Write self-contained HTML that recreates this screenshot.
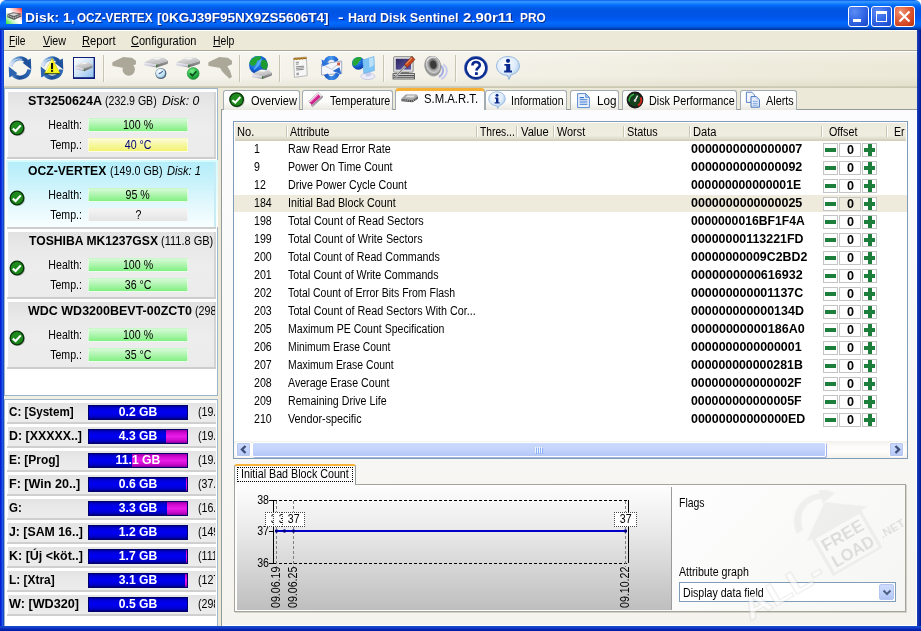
<!DOCTYPE html>
<html><head><meta charset="utf-8"><title>Hard Disk Sentinel</title>
<style>
*{box-sizing:border-box;margin:0;padding:0}
html,body{width:921px;height:631px;overflow:hidden;background:#ECE9D8}
body{position:relative;font-family:"Liberation Sans",sans-serif;font-size:12px;color:#000;line-height:1}
.a{position:absolute}
.t{position:absolute;white-space:nowrap;line-height:14px;height:14px;transform-origin:0 50%}
.s{display:inline-block;transform:scaleX(.885)}
.b{font-weight:bold}
#title{left:0;top:0;width:921px;height:30px;border-radius:6px 6px 0 0;
background:linear-gradient(to bottom,#0058EE 0%,#3593FF 5%,#288EFF 9%,#127DFF 13%,#036FFC 17%,#0262EE 23%,#0057E5 30%,#0054E3 40%,#0055EB 56%,#005BF5 66%,#026AFE 76%,#0062EF 86%,#0052D6 92%,#0040AB 96%,#003092 100%)}
#tl{left:0;top:0;width:8px;height:8px;background:#fff}
#bl{left:0;top:30px;width:4px;height:601px;background:linear-gradient(to right,#0019CF 0,#0A2CD8 30%,#2459E6 65%,#1040BC 100%)}
#br{left:917px;top:30px;width:4px;height:601px;background:linear-gradient(to right,#1A40BC 0,#0C2CA8 50%,#021A94 100%)}
#bb{left:0;top:626px;width:921px;height:5px;background:linear-gradient(to bottom,#1A4CCC 0,#1242C8 30%,#0828B8 60%,#0018A0 100%)}
.cb{position:absolute;top:6px;width:21px;height:21px;border:1px solid #fff;border-radius:3px;
background:radial-gradient(circle at 30% 25%,#5C8CF2 0,#3A6EEA 40%,#2455D8 75%,#1C45C0 100%)}
.cbx{background:radial-gradient(circle at 30% 25%,#EE9476 0,#E0603C 40%,#D0411C 75%,#B83412 100%)}
.menu{top:33.5px;font-size:12px}
.sep{position:absolute;top:55px;width:2px;height:27px;border-left:1px solid #C8C5B4;border-right:1px solid #F9F8F3}
#tb{left:4px;top:52px;width:913px;height:34px;background:linear-gradient(to bottom,rgba(255,255,255,.25) 0,rgba(255,255,255,0) 40%,rgba(120,110,60,0) 70%,rgba(120,110,60,.08) 100%),linear-gradient(to right,#F6F5EE 0,#F3F1E7 55%,#EEEBDC 85%,#ECE9D8 100%)}

#lp{left:4px;top:88px;width:214px;height:308px;background:#fff;border:1px solid #9DB5CB}
#lps{left:4px;top:396px;width:214px;height:3px;background:#F1EFE2}
#lp2{left:4px;top:399px;width:214px;height:227px;background:#fff;border:1px solid #9DB5CB;border-bottom:none}
.di{position:absolute;left:8px;width:208px;height:65px;background:linear-gradient(to bottom,#E1E1E1 0,#E9E9E9 25%,#EDEDED 55%,#EBEBEB 100%);border-right:2px solid #D4D4D4}
.dis{position:absolute;left:7px;width:209px;height:2px;background:#CDCDCD}
.di.sel{background:linear-gradient(to bottom,#B4EEFA 0,#C8F2FB 30%,#E2F8FD 65%,#F8FEFF 100%);border-right:2px solid #C8ECF6}
.glow{position:absolute;left:6px;width:212px;height:67px;background:linear-gradient(to bottom,#D8FBFC 0,#E8FCFD 50%,#FFFFFF 100%)}
.lab{width:60px;text-align:right;left:22px;transform-origin:100% 50%;transform:scaleX(.885)}
.bar{position:absolute;left:88px;width:100px;height:14px;text-align:center;line-height:12px;font-size:12px;border:1px solid rgba(255,255,255,.55)}
.g{background:linear-gradient(to bottom,#D6FAD6 0,#B4F6B4 40%,#82F082 100%)}
.y{background:linear-gradient(to bottom,#FCFCD8 0,#F8F8A8 40%,#F2F272 100%)}
.nv{color:#00007C}
.q{background:linear-gradient(to bottom,#F4F4F4 0,#ECECEC 50%,#E4E4E4 100%)}
.dr{position:absolute;left:8px;width:208px;height:19px;background:linear-gradient(to bottom,#E3E3E3 0,#EAEAEA 50%,#ECECEC 100%)}
.drs{position:absolute;left:7px;width:209px;height:2px;background:#CFCFCF}
.dl{left:9px;font-weight:bold;font-size:12px}
.db{position:absolute;left:88px;width:100px;height:15px;background:linear-gradient(to bottom,#0000A0 0,#0000D8 18%,#0000F4 50%,#0000D0 80%,#000088 100%);border:1px solid #000066;color:#fff;font-weight:bold;font-size:12px;text-align:center;line-height:13px;overflow:hidden}
.db i{position:absolute;right:0;top:0;height:13px;background:linear-gradient(to bottom,#A000A8 0,#D80CD8 25%,#E81CE8 50%,#CC08CC 80%,#8C009C 100%)}
.db span{position:relative}
#page{left:221px;top:109px;width:696px;height:517px;background:linear-gradient(to bottom,#FCFCFE 0,#F4F3EE 100%);border-left:1px solid #919B9C;border-top:1px solid #919B9C;box-shadow:-1px -1px 0 #fff inset}
.tab{position:absolute;top:90px;height:20px;background:linear-gradient(to bottom,#FFFFFF 0,#FCFCFA 55%,#F0EFE9 85%,#E8E7E0 100%);border:1px solid #A2ACB2;border-bottom:none;border-radius:3px 3px 0 0}
.tab.on{top:88px;height:22px;background:#FCFCFE;border-top:3px solid #F7B036;border-radius:4px 4px 0 0}
#lv{left:233px;top:121px;width:675px;height:338px;background:#fff;border:1px solid #7F9DB9}
#hd{left:235px;top:123px;width:671px;height:18px;background:linear-gradient(to bottom,#EDEBDD 0,#EFEDE0 70%,#E2DFCF 85%,#CFCBB9 100%)}
.hs{position:absolute;top:126px;width:2px;height:11px;border-left:1px solid #C7C5B2;border-right:1px solid #fff}
.ht{top:125px}
.no{left:254px;transform:scaleX(.885)}
.at{left:288px}
.dt{left:691px;font-weight:bold}
.ob{position:absolute;height:14px;background:#fff;border:1px solid #C4C4C4}
#sb{left:234px;top:441px;width:673px;height:17px;background:linear-gradient(to bottom,#F3F1EC 0,#FDFCFA 35%,#FDFCFA 65%,#F3F1EC 100%)}
.sbb{position:absolute;top:442px;width:15px;height:15px;border:1px solid #fff;border-radius:2px;background:linear-gradient(to bottom,#CBDAFD 0,#C1D2FB 60%,#B5C8F6 100%);box-shadow:0 0 0 1px #B8C6EE inset}
#thumb{left:252px;top:442px;width:574px;height:15px;border-radius:2px;border:1px solid #fff;background:linear-gradient(to bottom,#CBDAFD 0,#C1D2FB 55%,#B4C7F6 100%);box-shadow:1px 1px 0 #9FB3E8}
#gp{left:234px;top:484px;width:672px;height:128px;background:linear-gradient(135deg,#FFFFFF 0,#FDFDFD 60%,#F5F5F3 100%);border:1px solid #A4A49C;box-shadow:1px 1px 0 #D4D2C6}
#gbg{left:237px;top:487px;width:435px;height:123px;background:linear-gradient(to bottom,#FDFDFD 0,#EDEDED 30%,#D6D6D6 65%,#BEBEBE 100%);border-right:1px solid #9A9A9A}
#stab{left:234px;top:464px;width:122px;height:21px;background:#FBFBFB;border:1px solid #919B9C;border-bottom:none;border-top:2px solid #F8B238;border-radius:3px 3px 0 0}
#sfr{left:237px;top:467px;width:116px;height:15px;border:1px dotted #000}
.yl{width:20px;text-align:right;left:249px;transform-origin:100% 50%;transform:scaleX(.885)}
.mk{position:absolute;top:512px;width:23px;height:15px;background:#fff;border:1px dotted #444;text-align:center;line-height:13px;font-size:12px}
.xl{position:absolute;white-space:nowrap;font-size:12px;line-height:12px;height:12px;transform-origin:0 0;transform:rotate(-90deg) scaleX(.885)}
#cmb{left:679px;top:582px;width:217px;height:20px;background:#fff;border:1px solid #7F9DB9}
#cbt{left:879px;top:584px;width:15px;height:16px;border-radius:2px;border:1px solid #B7C6F0;background:linear-gradient(to bottom,#CDDBFD 0,#C1D2FB 60%,#AFC3F5 100%)}
</style></head><body><div id="root" style="position:absolute;left:0;top:0;width:921px;height:631px;will-change:transform">

<div class="a" style="left:0;top:0;width:921px;height:12px;background:#fff"></div>
<div class="a" id="title"></div>
<div class="a" style="left:4px;top:30px;width:913px;height:1px;background:#fff"></div>
<div class="a" id="bl"></div><div class="a" id="br"></div><div class="a" id="bb"></div>
<div class="a" style="left:6px;top:8px;width:16px;height:16px;background:linear-gradient(to top right,#28E428 0,#B8F4B8 25%,#fff 45%,#fff 55%,#FFB0B0 75%,#FF2828 100%)"></div>
<svg class="a" style="left:6px;top:8px" width="16" height="16"><path d="M1.500 6 L7 4.200 L15 5.400 L15.400 8.600 L8 12 L1.200 9.200 Z" fill="#3C3C3C" opacity=".8"/><path d="M3 6.300 L7.400 5.200 L13 6 L8 8 Z" fill="#D8D8D8"/><path d="M2 7.600 L8 10 L15 6.800" stroke="#E8E8E8" stroke-width=".8" fill="none" stroke-dasharray="1.500 1"/></svg>
<div class="t b" style="left:24.9px;top:10px;font-size:13px;line-height:16px;height:16px;color:#fff;text-shadow:1px 1px 0 #0A2C8C;transform:scaleX(1.0703)">Disk: 1,</div>
<div class="t b" style="left:77.2px;top:10px;font-size:13px;line-height:16px;height:16px;color:#fff;text-shadow:1px 1px 0 #0A2C8C;transform:scaleX(0.901)">OCZ-VERTEX</div>
<div class="t b" style="left:156.8px;top:10px;font-size:13px;line-height:16px;height:16px;color:#fff;text-shadow:1px 1px 0 #0A2C8C;transform:scaleX(1.037)">[0KGJ39F95NX9ZS5606T4]</div>
<div class="t b" style="left:338.0px;top:10px;font-size:13px;line-height:16px;height:16px;color:#fff;text-shadow:1px 1px 0 #0A2C8C;transform:scaleX(1.2892)">-</div>
<div class="t b" style="left:348.1px;top:10px;font-size:13px;line-height:16px;height:16px;color:#fff;text-shadow:1px 1px 0 #0A2C8C;transform:scaleX(0.961)">Hard Disk Sentinel</div>
<div class="t b" style="left:463.3px;top:10px;font-size:13px;line-height:16px;height:16px;color:#fff;text-shadow:1px 1px 0 #0A2C8C;transform:scaleX(1.1471)">2.90r11</div>
<div class="t b" style="left:519.6px;top:10px;font-size:13px;line-height:16px;height:16px;color:#fff;text-shadow:1px 1px 0 #0A2C8C;transform:scaleX(0.9087)">PRO</div>
<div class="cb" style="left:848px"><div class="a" style="left:4px;top:12px;width:8px;height:3px;background:#fff"></div></div>
<div class="cb" style="left:871px"><div class="a" style="left:4px;top:4px;width:11px;height:11px;border:1px solid #fff;border-top-width:3px"></div></div>
<div class="cb cbx" style="left:894px"><svg class="a" style="left:3px;top:3px" width="13" height="13"><path d="M1.5 1.5 L11.5 11.5 M11.5 1.5 L1.5 11.5" stroke="#fff" stroke-width="2.2"/></svg></div>
<div class="t menu" style="left:9px;transform:scaleX(0.853)"><u>F</u>ile</div>
<div class="t menu" style="left:43px;transform:scaleX(0.8916)"><u>V</u>iew</div>
<div class="t menu" style="left:81.5px;transform:scaleX(0.9325)"><u>R</u>eport</div>
<div class="t menu" style="left:131px;transform:scaleX(0.9161)"><u>C</u>onfiguration</div>
<div class="t menu" style="left:213px;transform:scaleX(0.8668)"><u>H</u>elp</div>
<div class="a" style="left:4px;top:50px;width:913px;height:2px;border-top:1px solid #ACA899;border-bottom:1px solid #fff"></div>
<div class="a" id="tb"></div>
<div class="a" style="left:4px;top:86px;width:913px;height:2px;background:linear-gradient(to bottom,#D5D2BF,#C6C3AE)"></div>
<div class="sep" style="left:103px"></div>
<div class="sep" style="left:239px"></div>
<div class="sep" style="left:279px"></div>
<div class="sep" style="left:383px"></div>
<div class="sep" style="left:455px"></div><div class="a" id="lp"></div><div class="a" id="lps"></div><div class="a" id="lp2"></div>
<div class="dis" style="top:157px"></div><div class="di" style="top:92px"></div>
<div class="a" style="left:28px;top:94px;width:187px;height:14px;overflow:hidden"><b class="t" style="left:-0.3px;top:0;transform:scaleX(1.0464)">ST3250624A</b><span class="t" style="left:77.0px;top:0;transform:scaleX(0.8807)">(232.9 GB)</span><i class="t" style="left:134.0px;top:0;transform:scaleX(1.014)">Disk: 0</i></div>
<svg class="a" style="left:7.600000000000001px;top:118.5px" width="19" height="19" viewBox="0 0 19 19"><circle cx="9.800" cy="9.800" r="7.300" fill="#3A3A3A" opacity=".3"/><circle cx="9" cy="9" r="6.800" fill="#1E8A1E" stroke="#083408" stroke-width="1.300"/><path d="M4.800 9.600 L7.600 12 L12.800 6.400" stroke="#fff" stroke-width="2.100" fill="none"/></svg>
<div class="t lab" style="top:118px">Health:</div><div class="bar g" style="top:118px"><span class="s">100 %</span></div>
<div class="t lab" style="top:138px">Temp.:</div><div class="bar y" style="top:138px"><span class="s nv">40 °C</span></div>
<div class="glow" style="top:160px"></div>
<div class="dis" style="top:227px"></div><div class="di sel" style="top:162px"></div>
<div class="a" style="left:28px;top:164px;width:187px;height:14px;overflow:hidden"><b class="t" style="left:0.2px;top:0;transform:scaleX(1.0124)">OCZ-VERTEX</b><span class="t" style="left:81.8px;top:0;transform:scaleX(0.8943)">(149.0 GB)</span><i class="t" style="left:138.9px;top:0;transform:scaleX(0.9267)">Disk: 1</i></div>
<svg class="a" style="left:7.600000000000001px;top:188.5px" width="19" height="19" viewBox="0 0 19 19"><circle cx="9.800" cy="9.800" r="7.300" fill="#3A3A3A" opacity=".3"/><circle cx="9" cy="9" r="6.800" fill="#1E8A1E" stroke="#083408" stroke-width="1.300"/><path d="M4.800 9.600 L7.600 12 L12.800 6.400" stroke="#fff" stroke-width="2.100" fill="none"/></svg>
<div class="t lab" style="top:188px">Health:</div><div class="bar g" style="top:188px"><span class="s">95 %</span></div>
<div class="t lab" style="top:208px">Temp.:</div><div class="bar q" style="top:208px"><span class="s">?</span></div>
<div class="dis" style="top:297px"></div><div class="di" style="top:232px"></div>
<div class="a" style="left:28px;top:234px;width:187px;height:14px;overflow:hidden"><b class="t" style="left:0.5px;top:0;transform:scaleX(1.0128)">TOSHIBA MK1237GSX</b><span class="t" style="left:133.1px;top:0;transform:scaleX(0.917)">(111.8 GB)</span></div>
<svg class="a" style="left:7.600000000000001px;top:258.5px" width="19" height="19" viewBox="0 0 19 19"><circle cx="9.800" cy="9.800" r="7.300" fill="#3A3A3A" opacity=".3"/><circle cx="9" cy="9" r="6.800" fill="#1E8A1E" stroke="#083408" stroke-width="1.300"/><path d="M4.800 9.600 L7.600 12 L12.800 6.400" stroke="#fff" stroke-width="2.100" fill="none"/></svg>
<div class="t lab" style="top:258px">Health:</div><div class="bar g" style="top:258px"><span class="s">100 %</span></div>
<div class="t lab" style="top:278px">Temp.:</div><div class="bar g" style="top:278px"><span class="s">36 °C</span></div>
<div class="dis" style="top:367px"></div><div class="di" style="top:302px"></div>
<div class="a" style="left:28px;top:304px;width:187px;height:14px;overflow:hidden"><b class="t" style="left:-0.2px;top:0;transform:scaleX(1.0415)">WDC WD3200BEVT-00ZCT0</b><span class="t" style="left:167.3px;top:0;transform:scaleX(0.8892)">(298.1 GB)</span></div>
<svg class="a" style="left:7.600000000000001px;top:328.5px" width="19" height="19" viewBox="0 0 19 19"><circle cx="9.800" cy="9.800" r="7.300" fill="#3A3A3A" opacity=".3"/><circle cx="9" cy="9" r="6.800" fill="#1E8A1E" stroke="#083408" stroke-width="1.300"/><path d="M4.800 9.600 L7.600 12 L12.800 6.400" stroke="#fff" stroke-width="2.100" fill="none"/></svg>
<div class="t lab" style="top:328px">Health:</div><div class="bar g" style="top:328px"><span class="s">100 %</span></div>
<div class="t lab" style="top:348px">Temp.:</div><div class="bar g" style="top:348px"><span class="s">35 °C</span></div>
<div class="drs" style="top:422px"></div><div class="dr" style="top:403px"></div>
<div class="t dl" style="top:405px;transform:scaleX(0.9702)">C: [System]</div>
<div class="db" style="top:405px"><span style="display:inline-block;transform:scaleX(1.0127)">0.2 GB</span></div>
<div class="a" style="left:198px;top:405px;width:17px;height:14px;overflow:hidden"><div class="t" style="left:0;top:0;transform:scaleX(.885)">(19.</div></div>
<div class="drs" style="top:446px"></div><div class="dr" style="top:427px"></div>
<div class="t dl" style="top:429px;transform:scaleX(1.0327)">D: [XXXXX..]</div>
<div class="db" style="top:429px"><i style="width:21px"></i><span style="display:inline-block;transform:scaleX(1.0127)">4.3 GB</span></div>
<div class="a" style="left:198px;top:429px;width:17px;height:14px;overflow:hidden"><div class="t" style="left:0;top:0;transform:scaleX(.885)">(19.</div></div>
<div class="drs" style="top:470px"></div><div class="dr" style="top:451px"></div>
<div class="t dl" style="top:453px;transform:scaleX(0.9966)">E: [Prog]</div>
<div class="db" style="top:453px"><i style="width:55px"></i><span style="display:inline-block;transform:scaleX(1.0175)">11.1 GB</span></div>
<div class="a" style="left:198px;top:453px;width:17px;height:14px;overflow:hidden"><div class="t" style="left:0;top:0;transform:scaleX(.885)">(19.</div></div>
<div class="drs" style="top:494px"></div><div class="dr" style="top:475px"></div>
<div class="t dl" style="top:477px;transform:scaleX(1.0487)">F: [Win 20..]</div>
<div class="db" style="top:477px"><i style="width:1px"></i><span style="display:inline-block;transform:scaleX(1.0127)">0.6 GB</span></div>
<div class="a" style="left:198px;top:477px;width:17px;height:14px;overflow:hidden"><div class="t" style="left:0;top:0;transform:scaleX(.885)">(37.</div></div>
<div class="drs" style="top:518px"></div><div class="dr" style="top:499px"></div>
<div class="t dl" style="top:501px;transform:scaleX(0.9593)">G:</div>
<div class="db" style="top:501px"><i style="width:20px"></i><span style="display:inline-block;transform:scaleX(1.0127)">3.3 GB</span></div>
<div class="a" style="left:198px;top:501px;width:17px;height:14px;overflow:hidden"><div class="t" style="left:0;top:0;transform:scaleX(.885)">(16.</div></div>
<div class="drs" style="top:542px"></div><div class="dr" style="top:523px"></div>
<div class="t dl" style="top:525px;transform:scaleX(1.0262)">J: [SAM 16..]</div>
<div class="db" style="top:525px"><span style="display:inline-block;transform:scaleX(1.0127)">1.2 GB</span></div>
<div class="a" style="left:198px;top:525px;width:17px;height:14px;overflow:hidden"><div class="t" style="left:0;top:0;transform:scaleX(.885)">(149</div></div>
<div class="drs" style="top:566px"></div><div class="dr" style="top:547px"></div>
<div class="t dl" style="top:549px;transform:scaleX(1.0408)">K: [Új &lt;köt..]</div>
<div class="db" style="top:549px"><i style="width:1px"></i><span style="display:inline-block;transform:scaleX(1.0127)">1.7 GB</span></div>
<div class="a" style="left:198px;top:549px;width:17px;height:14px;overflow:hidden"><div class="t" style="left:0;top:0;transform:scaleX(.885)">(111</div></div>
<div class="drs" style="top:590px"></div><div class="dr" style="top:571px"></div>
<div class="t dl" style="top:573px;transform:scaleX(0.9913)">L: [Xtra]</div>
<div class="db" style="top:573px"><i style="width:2px"></i><span style="display:inline-block;transform:scaleX(1.0127)">3.1 GB</span></div>
<div class="a" style="left:198px;top:573px;width:17px;height:14px;overflow:hidden"><div class="t" style="left:0;top:0;transform:scaleX(.885)">(127</div></div>
<div class="drs" style="top:614px"></div><div class="dr" style="top:595px"></div>
<div class="t dl" style="top:597px;transform:scaleX(1.0534)">W: [WD320]</div>
<div class="db" style="top:597px"><span style="display:inline-block;transform:scaleX(1.0127)">0.5 GB</span></div>
<div class="a" style="left:198px;top:597px;width:17px;height:14px;overflow:hidden"><div class="t" style="left:0;top:0;transform:scaleX(.885)">(298</div></div><div class="a" id="page"></div>
<div class="tab" style="left:223px;width:77px"></div>
<div class="t" style="left:251.1px;top:94px;transform:scaleX(0.9177)">Overview</div>
<div class="tab" style="left:302px;width:91px"></div>
<div class="t" style="left:330.2px;top:94px;transform:scaleX(0.895)">Temperature</div>
<div class="tab on" style="left:395px;width:90px"></div>
<div class="t" style="left:423.7px;top:92px;transform:scaleX(0.9434)">S.M.A.R.T.</div>
<div class="tab" style="left:485px;width:82px"></div>
<div class="t" style="left:511.0px;top:94px;transform:scaleX(0.8745)">Information</div>
<div class="tab" style="left:570px;width:49px"></div>
<div class="t" style="left:596.5px;top:94px;transform:scaleX(0.9735)">Log</div>
<div class="tab" style="left:622px;width:115px"></div>
<div class="t" style="left:648.5px;top:94px;transform:scaleX(0.8986)">Disk Performance</div>
<div class="tab" style="left:740px;width:57px"></div>
<div class="t" style="left:766.2px;top:94px;transform:scaleX(0.9059)">Alerts</div>
<div class="a" id="lv"></div><div class="a" id="hd"></div>
<div class="t ht" style="left:236.5px;transform:scaleX(0.9258)">No.</div>
<div class="t ht" style="left:289.8px;transform:scaleX(0.8836)">Attribute</div>
<div class="t ht" style="left:480.0px;transform:scaleX(0.8553)">Thres...</div>
<div class="t ht" style="left:520.5px;transform:scaleX(0.9325)">Value</div>
<div class="t ht" style="left:557.1px;transform:scaleX(0.906)">Worst</div>
<div class="t ht" style="left:626.9px;transform:scaleX(0.9051)">Status</div>
<div class="t ht" style="left:692.8px;transform:scaleX(0.9267)">Data</div>
<div class="t ht" style="left:829.1px;transform:scaleX(0.8932)">Offset</div>
<div class="t ht" style="left:894.3px;transform:scaleX(0.8833)">Er</div>
<div class="hs" style="left:286px"></div>
<div class="hs" style="left:476px"></div>
<div class="hs" style="left:516px"></div>
<div class="hs" style="left:553px"></div>
<div class="hs" style="left:623px"></div>
<div class="hs" style="left:689px"></div>
<div class="hs" style="left:821px"></div>
<div class="hs" style="left:886px"></div>
<div class="t no" style="top:142px">1</div><div class="t at" style="top:142px;transform:scaleX(0.8961)">Raw Read Error Rate</div><div class="t dt" style="top:142px;transform:scaleX(1.0423)">0000000000000007</div>
<div class="ob" style="left:823px;top:143px;width:15px"><div class="a" style="left:1px;top:4px;width:11px;height:4px;background:#1B7F3B"></div></div>
<div class="ob" style="left:839px;top:143px;width:22px;"></div><div class="t b" style="left:847px;top:143px;transform:scaleX(1.05)">0</div>
<div class="ob" style="left:862px;top:143px;width:15px"><div class="a" style="left:1px;top:4px;width:11px;height:4px;background:#1B7F3B"></div><div class="a" style="left:5px;top:0;width:4px;height:12px;background:#1B7F3B"></div></div>
<div class="t no" style="top:160px">9</div><div class="t at" style="top:160px;transform:scaleX(0.8851)">Power On Time Count</div><div class="t dt" style="top:160px;transform:scaleX(1.0423)">0000000000000092</div>
<div class="ob" style="left:823px;top:161px;width:15px"><div class="a" style="left:1px;top:4px;width:11px;height:4px;background:#1B7F3B"></div></div>
<div class="ob" style="left:839px;top:161px;width:22px;"></div><div class="t b" style="left:847px;top:161px;transform:scaleX(1.05)">0</div>
<div class="ob" style="left:862px;top:161px;width:15px"><div class="a" style="left:1px;top:4px;width:11px;height:4px;background:#1B7F3B"></div><div class="a" style="left:5px;top:0;width:4px;height:12px;background:#1B7F3B"></div></div>
<div class="t no" style="top:178px">12</div><div class="t at" style="top:178px;transform:scaleX(0.8877)">Drive Power Cycle Count</div><div class="t dt" style="top:178px;transform:scaleX(1.0183)">000000000000001E</div>
<div class="ob" style="left:823px;top:179px;width:15px"><div class="a" style="left:1px;top:4px;width:11px;height:4px;background:#1B7F3B"></div></div>
<div class="ob" style="left:839px;top:179px;width:22px;"></div><div class="t b" style="left:847px;top:179px;transform:scaleX(1.05)">0</div>
<div class="ob" style="left:862px;top:179px;width:15px"><div class="a" style="left:1px;top:4px;width:11px;height:4px;background:#1B7F3B"></div><div class="a" style="left:5px;top:0;width:4px;height:12px;background:#1B7F3B"></div></div>
<div class="a" style="left:234px;top:195px;width:673px;height:17px;background:#EEEBDD"></div>
<div class="t no" style="top:196px">184</div><div class="t at" style="top:196px;transform:scaleX(0.8912)">Initial Bad Block Count</div><div class="t dt" style="top:196px;transform:scaleX(1.0423)">0000000000000025</div>
<div class="ob" style="left:823px;top:197px;width:15px"><div class="a" style="left:1px;top:4px;width:11px;height:4px;background:#1B7F3B"></div></div>
<div class="ob" style="left:839px;top:197px;width:22px;background:#EEEBDD;"></div><div class="t b" style="left:847px;top:197px;transform:scaleX(1.05)">0</div>
<div class="ob" style="left:862px;top:197px;width:15px"><div class="a" style="left:1px;top:4px;width:11px;height:4px;background:#1B7F3B"></div><div class="a" style="left:5px;top:0;width:4px;height:12px;background:#1B7F3B"></div></div>
<div class="t no" style="top:214px">198</div><div class="t at" style="top:214px;transform:scaleX(0.9048)">Total Count of Read Sectors</div><div class="t dt" style="top:214px;transform:scaleX(1.0145)">0000000016BF1F4A</div>
<div class="ob" style="left:823px;top:215px;width:15px"><div class="a" style="left:1px;top:4px;width:11px;height:4px;background:#1B7F3B"></div></div>
<div class="ob" style="left:839px;top:215px;width:22px;"></div><div class="t b" style="left:847px;top:215px;transform:scaleX(1.05)">0</div>
<div class="ob" style="left:862px;top:215px;width:15px"><div class="a" style="left:1px;top:4px;width:11px;height:4px;background:#1B7F3B"></div><div class="a" style="left:5px;top:0;width:4px;height:12px;background:#1B7F3B"></div></div>
<div class="t no" style="top:232px">199</div><div class="t at" style="top:232px;transform:scaleX(0.9022)">Total Count of Write Sectors</div><div class="t dt" style="top:232px;transform:scaleX(1.0342)">00000000113221FD</div>
<div class="ob" style="left:823px;top:233px;width:15px"><div class="a" style="left:1px;top:4px;width:11px;height:4px;background:#1B7F3B"></div></div>
<div class="ob" style="left:839px;top:233px;width:22px;"></div><div class="t b" style="left:847px;top:233px;transform:scaleX(1.05)">0</div>
<div class="ob" style="left:862px;top:233px;width:15px"><div class="a" style="left:1px;top:4px;width:11px;height:4px;background:#1B7F3B"></div><div class="a" style="left:5px;top:0;width:4px;height:12px;background:#1B7F3B"></div></div>
<div class="t no" style="top:250px">200</div><div class="t at" style="top:250px;transform:scaleX(0.8889)">Total Count of Read Commands</div><div class="t dt" style="top:250px;transform:scaleX(1.0313)">00000000009C2BD2</div>
<div class="ob" style="left:823px;top:251px;width:15px"><div class="a" style="left:1px;top:4px;width:11px;height:4px;background:#1B7F3B"></div></div>
<div class="ob" style="left:839px;top:251px;width:22px;"></div><div class="t b" style="left:847px;top:251px;transform:scaleX(1.05)">0</div>
<div class="ob" style="left:862px;top:251px;width:15px"><div class="a" style="left:1px;top:4px;width:11px;height:4px;background:#1B7F3B"></div><div class="a" style="left:5px;top:0;width:4px;height:12px;background:#1B7F3B"></div></div>
<div class="t no" style="top:268px">201</div><div class="t at" style="top:268px;transform:scaleX(0.8866)">Total Count of Write Commands</div><div class="t dt" style="top:268px;transform:scaleX(1.047)">0000000000616932</div>
<div class="ob" style="left:823px;top:269px;width:15px"><div class="a" style="left:1px;top:4px;width:11px;height:4px;background:#1B7F3B"></div></div>
<div class="ob" style="left:839px;top:269px;width:22px;"></div><div class="t b" style="left:847px;top:269px;transform:scaleX(1.05)">0</div>
<div class="ob" style="left:862px;top:269px;width:15px"><div class="a" style="left:1px;top:4px;width:11px;height:4px;background:#1B7F3B"></div><div class="a" style="left:5px;top:0;width:4px;height:12px;background:#1B7F3B"></div></div>
<div class="t no" style="top:286px">202</div><div class="t at" style="top:286px;transform:scaleX(0.8731)">Total Count of Error Bits From Flash</div><div class="t dt" style="top:286px;transform:scaleX(1.0386)">000000000001137C</div>
<div class="ob" style="left:823px;top:287px;width:15px"><div class="a" style="left:1px;top:4px;width:11px;height:4px;background:#1B7F3B"></div></div>
<div class="ob" style="left:839px;top:287px;width:22px;"></div><div class="t b" style="left:847px;top:287px;transform:scaleX(1.05)">0</div>
<div class="ob" style="left:862px;top:287px;width:15px"><div class="a" style="left:1px;top:4px;width:11px;height:4px;background:#1B7F3B"></div><div class="a" style="left:5px;top:0;width:4px;height:12px;background:#1B7F3B"></div></div>
<div class="t no" style="top:304px">203</div><div class="t at" style="top:304px;transform:scaleX(0.8967)">Total Count of Read Sectors With Cor...</div><div class="t dt" style="top:304px;transform:scaleX(1.0379)">000000000000134D</div>
<div class="ob" style="left:823px;top:305px;width:15px"><div class="a" style="left:1px;top:4px;width:11px;height:4px;background:#1B7F3B"></div></div>
<div class="ob" style="left:839px;top:305px;width:22px;"></div><div class="t b" style="left:847px;top:305px;transform:scaleX(1.05)">0</div>
<div class="ob" style="left:862px;top:305px;width:15px"><div class="a" style="left:1px;top:4px;width:11px;height:4px;background:#1B7F3B"></div><div class="a" style="left:5px;top:0;width:4px;height:12px;background:#1B7F3B"></div></div>
<div class="t no" style="top:322px">205</div><div class="t at" style="top:322px;transform:scaleX(0.8788)">Maximum PE Count Specification</div><div class="t dt" style="top:322px;transform:scaleX(1.0452)">00000000000186A0</div>
<div class="ob" style="left:823px;top:323px;width:15px"><div class="a" style="left:1px;top:4px;width:11px;height:4px;background:#1B7F3B"></div></div>
<div class="ob" style="left:839px;top:323px;width:22px;"></div><div class="t b" style="left:847px;top:323px;transform:scaleX(1.05)">0</div>
<div class="ob" style="left:862px;top:323px;width:15px"><div class="a" style="left:1px;top:4px;width:11px;height:4px;background:#1B7F3B"></div><div class="a" style="left:5px;top:0;width:4px;height:12px;background:#1B7F3B"></div></div>
<div class="t no" style="top:340px">206</div><div class="t at" style="top:340px;transform:scaleX(0.8634)">Minimum Erase Count</div><div class="t dt" style="top:340px;transform:scaleX(1.0358)">0000000000000001</div>
<div class="ob" style="left:823px;top:341px;width:15px"><div class="a" style="left:1px;top:4px;width:11px;height:4px;background:#1B7F3B"></div></div>
<div class="ob" style="left:839px;top:341px;width:22px;"></div><div class="t b" style="left:847px;top:341px;transform:scaleX(1.05)">0</div>
<div class="ob" style="left:862px;top:341px;width:15px"><div class="a" style="left:1px;top:4px;width:11px;height:4px;background:#1B7F3B"></div><div class="a" style="left:5px;top:0;width:4px;height:12px;background:#1B7F3B"></div></div>
<div class="t no" style="top:358px">207</div><div class="t at" style="top:358px;transform:scaleX(0.8661)">Maximum Erase Count</div><div class="t dt" style="top:358px;transform:scaleX(1.0278)">000000000000281B</div>
<div class="ob" style="left:823px;top:359px;width:15px"><div class="a" style="left:1px;top:4px;width:11px;height:4px;background:#1B7F3B"></div></div>
<div class="ob" style="left:839px;top:359px;width:22px;"></div><div class="t b" style="left:847px;top:359px;transform:scaleX(1.05)">0</div>
<div class="ob" style="left:862px;top:359px;width:15px"><div class="a" style="left:1px;top:4px;width:11px;height:4px;background:#1B7F3B"></div><div class="a" style="left:5px;top:0;width:4px;height:12px;background:#1B7F3B"></div></div>
<div class="t no" style="top:376px">208</div><div class="t at" style="top:376px;transform:scaleX(0.8855)">Average Erase Count</div><div class="t dt" style="top:376px;transform:scaleX(1.0294)">000000000000002F</div>
<div class="ob" style="left:823px;top:377px;width:15px"><div class="a" style="left:1px;top:4px;width:11px;height:4px;background:#1B7F3B"></div></div>
<div class="ob" style="left:839px;top:377px;width:22px;"></div><div class="t b" style="left:847px;top:377px;transform:scaleX(1.05)">0</div>
<div class="ob" style="left:862px;top:377px;width:15px"><div class="a" style="left:1px;top:4px;width:11px;height:4px;background:#1B7F3B"></div><div class="a" style="left:5px;top:0;width:4px;height:12px;background:#1B7F3B"></div></div>
<div class="t no" style="top:394px">209</div><div class="t at" style="top:394px;transform:scaleX(0.8852)">Remaining Drive Life</div><div class="t dt" style="top:394px;transform:scaleX(1.0294)">000000000000005F</div>
<div class="ob" style="left:823px;top:395px;width:15px"><div class="a" style="left:1px;top:4px;width:11px;height:4px;background:#1B7F3B"></div></div>
<div class="ob" style="left:839px;top:395px;width:22px;"></div><div class="t b" style="left:847px;top:395px;transform:scaleX(1.05)">0</div>
<div class="ob" style="left:862px;top:395px;width:15px"><div class="a" style="left:1px;top:4px;width:11px;height:4px;background:#1B7F3B"></div><div class="a" style="left:5px;top:0;width:4px;height:12px;background:#1B7F3B"></div></div>
<div class="t no" style="top:412px">210</div><div class="t at" style="top:412px;transform:scaleX(0.897)">Vendor-specific</div><div class="t dt" style="top:412px;transform:scaleX(1.0381)">00000000000000ED</div>
<div class="ob" style="left:823px;top:413px;width:15px"><div class="a" style="left:1px;top:4px;width:11px;height:4px;background:#1B7F3B"></div></div>
<div class="ob" style="left:839px;top:413px;width:22px;"></div><div class="t b" style="left:847px;top:413px;transform:scaleX(1.05)">0</div>
<div class="ob" style="left:862px;top:413px;width:15px"><div class="a" style="left:1px;top:4px;width:11px;height:4px;background:#1B7F3B"></div><div class="a" style="left:5px;top:0;width:4px;height:12px;background:#1B7F3B"></div></div><div class="a" id="sb"></div>
<div class="sbb" style="left:236px"><svg class="a" style="left:3px;top:2px" width="8" height="9"><path d="M5.5 1 L2 4.5 L5.5 8" stroke="#3F4F7A" stroke-width="2.400" fill="none"/></svg></div>
<div class="sbb" style="left:889px"><svg class="a" style="left:3px;top:2px" width="8" height="9"><path d="M2.500 1 L6 4.500 L2.500 8" stroke="#3F4F7A" stroke-width="2.400" fill="none"/></svg></div>
<div class="a" id="thumb"></div>
<div class="a" style="left:535px;top:447px;width:1px;height:6px;background:#EEF4FE"></div><div class="a" style="left:536px;top:448px;width:1px;height:6px;background:#8CB0F8"></div>
<div class="a" style="left:537px;top:447px;width:1px;height:6px;background:#EEF4FE"></div><div class="a" style="left:538px;top:448px;width:1px;height:6px;background:#8CB0F8"></div>
<div class="a" style="left:539px;top:447px;width:1px;height:6px;background:#EEF4FE"></div><div class="a" style="left:540px;top:448px;width:1px;height:6px;background:#8CB0F8"></div>
<div class="a" style="left:541px;top:447px;width:1px;height:6px;background:#EEF4FE"></div><div class="a" style="left:542px;top:448px;width:1px;height:6px;background:#8CB0F8"></div>
<div class="a" id="gp"></div><div class="a" id="gbg"></div>
<div class="a" id="stab"></div><div class="a" id="sfr"></div>
<div class="t" style="left:241px;top:467px;transform:scaleX(0.8929)">Initial Bad Block Count</div>
<svg class="a" style="left:237px;top:487px" width="434" height="122" shape-rendering="crispEdges">
<g stroke="#000" stroke-width="1" fill="none">
<line x1="36.5" y1="13" x2="36.5" y2="76"/>
<line x1="391.5" y1="13" x2="391.5" y2="76"/>
<line x1="32" y1="13.5" x2="37" y2="13.5"/><line x1="32" y1="44.5" x2="37" y2="44.5"/><line x1="32" y1="76.5" x2="37" y2="76.5"/>
<line x1="37" y1="13.5" x2="392" y2="13.5" stroke-dasharray="3 2"/>
<line x1="37" y1="76.5" x2="392" y2="76.5" stroke-dasharray="3 2"/>
</g>
<g stroke="#808080" stroke-width="1" stroke-dasharray="3 2">
<line x1="39.5" y1="14" x2="39.5" y2="80"/><line x1="56.5" y1="14" x2="56.5" y2="80"/><line x1="388.5" y1="14" x2="388.5" y2="80"/>
</g>
<line x1="38" y1="44" x2="389" y2="44" stroke="#0000C8" stroke-width="2"/>
<g fill="#000080" shape-rendering="auto"><circle cx="39.500" cy="44" r="1.700"/><circle cx="47.500" cy="44" r="1.700"/><circle cx="56.500" cy="44" r="1.700"/><circle cx="388.500" cy="44" r="1.700"/></g>
</svg>
<div class="t yl" style="top:493px">38</div>
<div class="t yl" style="top:524px">37</div>
<div class="t yl" style="top:556px">36</div>
<div class="mk" style="left:265px"><span class="s">37</span></div><div class="mk" style="left:273px"><span class="s">37</span></div><div class="mk" style="left:282px"><span class="s">37</span></div><div class="mk" style="left:614px"><span class="s">37</span></div>
<div class="xl" style="left:270px;top:608px">09.06.19</div>
<div class="xl" style="left:287px;top:608px">09.06.25</div>
<div class="xl" style="left:619px;top:608px">09.10.22</div>
<div class="t" style="left:679px;top:496px;transform:scaleX(0.8724)">Flags</div><div class="t" style="left:678.5px;top:565px;transform:scaleX(0.8867)">Attribute graph</div>
<div class="a" id="cmb"></div><div class="a" id="cbt"><svg class="a" style="left:2px;top:4px" width="10" height="8"><path d="M1.5 1.5 L5 5 L8.5 1.5" stroke="#4D6185" stroke-width="2" fill="none"/></svg></div>
<div class="t" style="left:683px;top:586px;transform:scaleX(0.883)">Display data field</div>
<svg class="a" style="left:740px;top:490px" width="181" height="141" viewBox="0 0 181 141"><g transform="translate(10,131) rotate(-30)" font-family="Liberation Sans, sans-serif" font-weight="bold" fill="#6E6E6E" fill-opacity=".22" stroke="#fff" stroke-opacity=".6" stroke-width="1" paint-order="stroke">
<text x="0" y="0" font-size="31" textLength="88" lengthAdjust="spacingAndGlyphs" fill="#fff" fill-opacity=".55" stroke="#888" stroke-opacity=".22">ALL-</text>
<text x="100" y="-22" font-size="17" textLength="46" lengthAdjust="spacingAndGlyphs">FREE</text>
<text x="101" y="-3" font-size="17" textLength="46" lengthAdjust="spacingAndGlyphs">LOAD</text>
<text x="156" y="-5" font-size="10" textLength="27" lengthAdjust="spacingAndGlyphs">.NET</text>
<path fill-opacity=".08" d="M88 -40 L124 -66 L160 -40 L152 -40 L152 3 L94 3 L94 -40 Z M98 -38 L98 0 L148 0 L148 -38 Z" fill-rule="evenodd"/>
<path fill-opacity=".08" d="M84 -52 C86 -74 108 -84 124 -76 L126 -83 L138 -68 L121 -65 L123 -70 C110 -76 94 -70 92 -52 Z"/>
</g></svg><svg width="0" height="0" style="position:absolute"><defs>
<linearGradient id="gB" x1="0" y1="0" x2="0" y2="1"><stop offset="0" stop-color="#6FA6E0"/><stop offset=".45" stop-color="#2F6DB8"/><stop offset="1" stop-color="#143F86"/></linearGradient>
<linearGradient id="gS" x1="0" y1="0" x2="1" y2="1"><stop offset="0" stop-color="#FFFFFF"/><stop offset=".5" stop-color="#DCDCDC"/><stop offset="1" stop-color="#9C9C9C"/></linearGradient>
<linearGradient id="gSq" x1="0" y1="0" x2="1" y2="1"><stop offset="0" stop-color="#FFFFFF"/><stop offset=".5" stop-color="#CFE4F8"/><stop offset="1" stop-color="#8FC0EE"/></linearGradient>
<radialGradient id="gGl" cx=".35" cy=".3" r=".8"><stop offset="0" stop-color="#5CB6FF"/><stop offset=".5" stop-color="#1668DC"/><stop offset="1" stop-color="#0A2F98"/></radialGradient>
<radialGradient id="gGr" cx=".4" cy=".3" r=".8"><stop offset="0" stop-color="#7CF08C"/><stop offset=".6" stop-color="#28B446"/><stop offset="1" stop-color="#0E7A26"/></radialGradient>
<radialGradient id="gCk" cx=".4" cy=".35" r=".8"><stop offset="0" stop-color="#FFFFFF"/><stop offset=".6" stop-color="#BFE2F6"/><stop offset="1" stop-color="#7FAFD0"/></radialGradient>
<radialGradient id="gIn" cx=".4" cy=".3" r=".8"><stop offset="0" stop-color="#FFFFFF"/><stop offset=".55" stop-color="#DCEBFA"/><stop offset="1" stop-color="#8FB8E4"/></radialGradient>
<radialGradient id="gSp" cx=".54" cy=".42" r=".62"><stop offset="0" stop-color="#444"/><stop offset=".3" stop-color="#5E5E5E"/><stop offset=".48" stop-color="#9E9E9E"/><stop offset=".66" stop-color="#CCCCCC"/><stop offset=".82" stop-color="#8E8E8E"/><stop offset="1" stop-color="#D6D6D6"/></radialGradient>
<linearGradient id="gSc" x1="0" y1="0" x2="1" y2="1"><stop offset="0" stop-color="#2C2660"/><stop offset="1" stop-color="#6258A8"/></linearGradient>
<linearGradient id="gDt" x1="0" y1="0" x2=".6" y2="1"><stop offset="0" stop-color="#F2F2F2"/><stop offset=".5" stop-color="#D2D2D2"/><stop offset="1" stop-color="#B4B4B8"/></linearGradient>
<linearGradient id="gDl" x1="0" y1="0" x2="0" y2="1"><stop offset="0" stop-color="#F4F2FA"/><stop offset=".6" stop-color="#D0CEDA"/><stop offset="1" stop-color="#8E8E92"/></linearGradient>
<linearGradient id="gDr" x1="0" y1="0" x2="0" y2="1"><stop offset="0" stop-color="#A2A2A2"/><stop offset="1" stop-color="#6A6A6A"/></linearGradient>
<linearGradient id="gMa" x1="1" y1="0" x2="0" y2="0"><stop offset="0" stop-color="#1C60CC"/><stop offset=".5" stop-color="#4C9CF0"/><stop offset="1" stop-color="#2A74DC"/></linearGradient><linearGradient id="gMb" x1="0" y1="0" x2="1" y2="0"><stop offset="0" stop-color="#1C5CC4"/><stop offset=".5" stop-color="#3C8CE8"/><stop offset="1" stop-color="#2468D0"/></linearGradient>
<g id="disk"><path d="M0.200 6.4 L12.700 8.500 L12.700 11.600 L1 9.500 Q0.200 9.200 0.200 8.400 Z" fill="url(#gDl)"/><path d="M12.700 8.500 L24.100 4.700 L24.100 6.800 Q24.100 7.600 23.300 7.900 L12.700 11.600 Z" fill="url(#gDr)"/><path d="M11.600 1.200 L19.600 1.800 Q20.600 2 21.400 2.700 L24.100 4.700 L12.700 8.500 L0.200 6.400 L9.800 1.500 Q10.600 1.100 11.600 1.200 Z" fill="url(#gDt)"/><path d="M11.400 1.800 L17 2.200 L14.600 3.600 L8.600 3.100 Z" fill="#fff" opacity=".8"/><rect x="12.100" y="8.600" width="1.200" height="2.800" fill="#2C7A2C"/></g>
<linearGradient id="gR1" x1="0" y1="0" x2="1" y2="0"><stop offset="0" stop-color="#D4E2F4"/><stop offset=".35" stop-color="#6C9CD4"/><stop offset=".7" stop-color="#2A62AC"/><stop offset="1" stop-color="#1A4A92"/></linearGradient>
<linearGradient id="gR2" x1="0" y1="0" x2="1" y2="0"><stop offset="0" stop-color="#3C74BC"/><stop offset=".4" stop-color="#1C4C96"/><stop offset="1" stop-color="#2E68B4"/></linearGradient>
<g id="refr"><path d="M2.700 10.600 A9.200 9.200 0 0 1 18.600 5.400" fill="none" stroke="url(#gR1)" stroke-width="4"/><path d="M14.600 6.800 L22.800 2.600 L23.300 13.400 Z" fill="#1F529C"/><path d="M21.300 13.400 A9.200 9.200 0 0 1 5.400 18.600" fill="none" stroke="url(#gR2)" stroke-width="4"/><path d="M9.400 17.200 L1.200 21.400 L0.700 10.600 Z" fill="#2C64B0"/><path d="M3.600 9 A8 8 0 0 1 14 3.400" fill="none" stroke="#F0F6FC" stroke-width="1" opacity=".7"/></g>
</defs></svg>
<svg class="a" style="left:8px;top:56px" width="24" height="24" viewBox="0 0 24 24"><use href="#refr"/></svg>
<svg class="a" style="left:40px;top:56px" width="24" height="24" viewBox="0 0 24 24"><use href="#refr"/><path d="M12 2.400 L19.900 17.300 L4.700 17.300 Z" fill="#F6F61C" stroke="#C8B800" stroke-width=".6"/><path d="M11.600 4.400 L6.200 15.600" stroke="#FCFCB0" stroke-width="1.200"/><path d="M4.800 17.800 L19.800 17.800" stroke="#1C3C1C" stroke-width="1.100"/><rect x="11" y="7" width="2.100" height="6.200" fill="#111"/><rect x="11" y="14.100" width="2.100" height="1.700" fill="#111"/></svg>
<svg class="a" style="left:72px;top:56px" width="24" height="24" viewBox="0 0 24 24"><rect x="1" y="1" width="22" height="22" fill="#0C1E7A"/><rect x="2" y="2" width="19.6" height="19.2" fill="url(#gSq)"/><g transform="translate(2.800,4.800) scale(.74,.9)"><use href="#disk"/></g></svg>
<svg class="a" style="left:112px;top:56px" width="24" height="24" viewBox="0 0 24 24"><path transform="translate(1,.8) scale(.92)" d="M10.900 1.200 L20 1.900 L24.100 4.700 L24.100 7.500 L20.400 9 A5.800 5.800 0 1 1 11.300 13.800 L11.800 11.400 L0.200 9.200 L0.200 6.400 Z" fill="#ACA899" stroke="#ACA899" stroke-width="1.800" stroke-linejoin="round"/></svg>
<svg class="a" style="left:144px;top:56px" width="24" height="24" viewBox="0 0 24 24"><use href="#disk"/><circle cx="16.900" cy="17.500" r="5.500" fill="#55657A"/><circle cx="16.500" cy="17.100" r="4.700" fill="url(#gCk)"/><path d="M16.500 17.100 L18.800 15.100 M16.500 17.100 L14.800 17.600" stroke="#3A5A90" stroke-width="1.100"/></svg>
<svg class="a" style="left:176px;top:56px" width="24" height="24" viewBox="0 0 24 24"><use href="#disk"/><circle cx="17.200" cy="17.500" r="5.900" fill="url(#gGr)" stroke="#1C8A34" stroke-width=".6"/><path d="M14 17.300 L16.400 19.700 L20.500 15.200" fill="none" stroke="#0B4E1A" stroke-width="1.700"/></svg>
<svg class="a" style="left:208px;top:56px" width="24" height="24" viewBox="0 0 24 24"><path transform="translate(1,.8) scale(.92)" d="M10.900 1.200 L20 1.900 L24.100 4.700 L24.100 7.500 L19 9.600 L20 12.400 L22 15.400 L24 21.600 L22.400 22.600 L17.600 18 L14.600 14.800 L12.600 11.400 L0.200 9.200 L0.200 6.400 Z" fill="#ACA899" stroke="#ACA899" stroke-width="1.800" stroke-linejoin="round"/></svg>
<svg class="a" style="left:248px;top:56px" width="24" height="24" viewBox="0 0 24 24"><circle cx="10.400" cy="9" r="9.400" fill="url(#gGl)"/><path d="M3.400 3.600 C5.600 0.800 10 -0.400 13 0.600 C14 2.400 11.600 4 9.600 4.600 C8.400 6.400 8.600 8.400 6.400 9.600 C4.400 10.200 2.400 9 1.400 7.400 C1.600 6 2.400 4.600 3.400 3.600 Z" fill="#22A432"/><path d="M13.600 4.400 C15.600 2.600 18 3.600 19 6 C20 8.600 19.600 11.400 18.400 13.400 C16.400 14 14.400 13 13.400 11 C12.400 8.600 12.400 6 13.600 4.400 Z" fill="#1E9A30"/><path d="M6 13.400 C9 11 11.400 7 13.400 3.400" stroke="#7CD0FF" stroke-width="1.600" fill="none" opacity=".6"/><g transform="translate(3.800,12.400) scale(.84,.92)"><use href="#disk"/></g></svg>
<svg class="a" style="left:288px;top:56px" width="24" height="24" viewBox="0 0 24 24"><path d="M5.600 2 L18.400 1 L19.200 19.600 L6.400 21.400 Z" fill="#F6F6F6" stroke="#A8A8A8" stroke-width=".8"/><path d="M5.600 2 L18.400 1 L18.500 3 L5.700 4.100 Z" fill="#C89030"/><path d="M6 3.600 L7.400 2.600 L8.800 3.400 L10.200 2.400 L11.600 3.200 L13 2.200 L14.400 3 L15.800 2 L17.200 2.800 L18.400 1.900" fill="none" stroke="#7A5418" stroke-width=".7"/><g stroke="#8A8A8A" stroke-width="1"><path d="M7.800 6.400 L11 6.200 M7.900 8.200 L10.600 8 M8 10.800 L16 10.200 M8.100 12.400 L16.200 11.800 M8.200 14 L15.600 13.400 M8.400 17.400 L11 17.200 M8.500 18.800 L10.800 18.600"/></g></svg>
<svg class="a" style="left:320px;top:56px" width="24" height="24" viewBox="0 0 24 24"><path d="M1.500 8 L21.700 5 L21.700 17.500 L1.500 19 Z" fill="#F4F6FB" stroke="#8C98B8" stroke-width=".8"/><path d="M1.900 8.300 L11.800 13.400 L21.400 5.400" fill="none" stroke="#B4BCD2" stroke-width=".8"/><rect x="17.200" y="6.600" width="2.800" height="2.800" fill="#D0563A"/><path d="M16.800 5 C14.400 0.400 8.200 0.200 5.600 5.800" fill="none" stroke="url(#gMa)" stroke-width="4.200"/><path d="M2.400 10.600 L1.600 3.600 L9.400 7.800 Z" fill="#2A74DC"/><path d="M5.800 18.400 C8.400 23.600 15 23.800 17.600 17.400" fill="none" stroke="url(#gMb)" stroke-width="4.200"/><path d="M19.400 11.200 L21.400 18.200 L12.600 15 Z" fill="#2468D0"/></svg>
<svg class="a" style="left:352px;top:56px" width="24" height="24" viewBox="0 0 24 24"><circle cx="6.400" cy="7.300" r="6.400" fill="url(#gGl)"/><path d="M1.600 3.600 C3.600 1 7.600 0.400 9.800 1.800 C9.400 4 7.400 4.600 6.600 6.600 C5.800 9 3.600 10.400 1 9.600 C0 7.600 0.400 5.200 1.600 3.600 Z" fill="#25A835"/><ellipse cx="15.800" cy="20.300" rx="7" ry="3.300" fill="#ECECF8" stroke="#B4B4D8" stroke-width=".6"/><path d="M13.800 15.400 L18.400 14.400 L19 20 L13.600 20.400 Z" fill="#C8CCEC"/><path d="M10.700 3.900 L22 0.500 L22.500 14.600 L11.800 17.500 Z" fill="#7CC4F6" stroke="#5CA4DC" stroke-width=".5"/><path d="M17 2.400 L21.400 1.200 L21.800 9 L17.600 12 Z" fill="#D4ECFC" opacity=".7"/></svg>
<svg class="a" style="left:392px;top:56px" width="24" height="24" viewBox="0 0 24 24"><rect x="1.600" y="0.600" width="19.600" height="15.600" rx="1" fill="#DCDCDC" stroke="#7E7E7E" stroke-width=".8"/><rect x="3.800" y="2.800" width="15.200" height="10.800" fill="url(#gSc)"/><rect x="1" y="17.600" width="21.600" height="5.400" fill="#E4E4E4" stroke="#4A4A4A" stroke-width=".8"/><path d="M1.400 19.400 L22.400 19.400 M1.400 21.200 L22.400 21.200" stroke="#2A2A2A" stroke-width=".9"/><rect x="6" y="16.200" width="11" height="1.600" fill="#6A6A6A"/><path d="M3.400 21 L13.400 10" stroke="#D0D0D0" stroke-width="2.200"/><path d="M3.400 21 L13.400 10" stroke="#5A5A5A" stroke-width=".8"/><path d="M12.200 8.600 L19.800 0.400 L23 3.400 L15.400 11.600 Z" fill="#C8441A" stroke="#5A2410" stroke-width=".6"/><path d="M13.800 8.400 L19.800 2" stroke="#F09060" stroke-width="1.100"/></svg>
<svg class="a" style="left:424px;top:56px" width="24" height="24" viewBox="0 0 24 24"><path d="M16.400 9.600 C20.400 12.400 20 17.600 15 21" fill="none" stroke="#A4ACE2" stroke-width="2.200" opacity=".9"/><path d="M19.400 8.400 C24.600 12.400 24 19.400 17.400 23.200" fill="none" stroke="#BCC2EC" stroke-width="1.800" opacity=".85"/><ellipse cx="8.800" cy="10" rx="8" ry="10.200" transform="rotate(-12 8.800 10)" fill="url(#gSp)" stroke="#8A8A8A" stroke-width=".6"/><ellipse cx="9.400" cy="8.800" rx="3" ry="3.900" transform="rotate(-12 9.400 8.800)" fill="#3A3A3A"/><path d="M3 5 C5 1.500 9 0.500 12 1.600" fill="none" stroke="#F4F4F4" stroke-width="1.100" opacity=".8"/></svg>
<svg class="a" style="left:464px;top:56px" width="24" height="24" viewBox="0 0 24 24"><circle cx="12" cy="12" r="10.400" fill="#fff" stroke="#0B2A8E" stroke-width="2.6"/><circle cx="12" cy="12" r="11.6" fill="none" stroke="#5A78C8" stroke-width=".6"/><path d="M8.4 9.4 C8.4 5 15.8 5 15.8 9.2 C15.8 11.8 12.6 11.8 12.400 14.6" fill="none" stroke="#0B2A8E" stroke-width="2.6"/><rect x="11" y="16.2" width="2.8" height="2.8" fill="#0B2A8E"/></svg>
<svg class="a" style="left:496px;top:56px" width="24" height="24" viewBox="0 0 24 24"><path d="M12 0.600 C18.600 0.600 23.400 4.600 23.400 10 C23.400 14.400 20 17.800 15.200 18.800 L13 23.400 L11.400 19.400 C5.200 19.200 0.600 15.200 0.600 10 C0.600 4.600 5.400 0.600 12 0.600 Z" fill="url(#gIn)" stroke="#8CB0DC" stroke-width=".9"/><circle cx="12" cy="4.800" r="2.100" fill="#0B2A8E"/><path d="M8.400 8 L14.200 8 L14.200 14.600 L16 14.600 L16 16.400 L8.200 16.400 L8.200 14.600 L10.200 14.600 L10.200 9.800 L8.400 9.800 Z" fill="#0B2A8E"/></svg>
<svg class="a" style="left:228px;top:91px" width="18" height="18" viewBox="0 0 18 18"><circle cx="9.400" cy="9.400" r="7.300" fill="#3A3A3A" opacity=".3"/><circle cx="8.600" cy="8.600" r="6.800" fill="#1E8A1E" stroke="#083408" stroke-width="1.300"/><path d="M4.400 9.200 L7.200 11.600 L12.400 6" stroke="#fff" stroke-width="2.100" fill="none"/></svg>
<svg class="a" style="left:306px;top:90px" width="20" height="19" viewBox="0 0 20 19"><path d="M4.600 13.600 L14.600 4.400" stroke="#8E8E8E" stroke-width="6.600"/><path d="M4.400 13.200 L14.200 4.200" stroke="#F4F4F4" stroke-width="5"/><path d="M4.600 13.600 L13.400 5.400" stroke="#D0208C" stroke-width="3.600"/><path d="M4.200 12 L12.600 4.200" stroke="#F4A0D4" stroke-width="1.100"/><path d="M5 15.200 L6.600 16.600 L16.600 7.400 L16.400 5.800" fill="none" stroke="#9C9C9C" stroke-width="1"/></svg>
<svg class="a" style="left:401px;top:94px" width="18" height="9" viewBox="0 0 18 9"><g transform="scale(.72)"><path d="M6.500 1 L21.500 1 L23.600 3.600 L23.600 6.600 L16 11.600 L0.600 10 L0.600 7 Z" fill="#4E4E4E"/><path d="M6.500 1 L21.500 1 L23.600 3.600 L16 8.600 L0.600 7 Z" fill="#A8A8A8"/><path d="M9 2 L20 2 L17 5 L6 4.600 Z" fill="#E4E4E4"/><path d="M2 8.400 L15.600 10 L22.800 5.400" stroke="#DADADA" stroke-width="1" fill="none" stroke-dasharray="1.600 1.400"/></g></svg>
<svg class="a" style="left:488px;top:91px" width="18" height="18" viewBox="0 0 18 18"><path d="M9 0.8 C13.8 0.8 17.2 3.8 17.2 7.8 C17.2 11 14.8 13.6 11.4 14.4 L9.8 17.4 L8.6 14.8 C4 14.6 0.8 11.6 0.8 7.8 C0.8 3.800 4.2 0.8 9 0.8 Z" fill="url(#gIn)" stroke="#8CB2E0" stroke-width=".8"/><circle cx="9" cy="4.2" r="1.5" fill="#0B2A8E"/><path d="M6.8 6.6 L10.400 6.6 L10.400 11.2 L11.6 11.2 L11.6 12.400 L6.6 12.400 L6.6 11.2 L8 11.2 L8 7.8 L6.8 7.8 Z" fill="#0B2A8E"/></svg>
<svg class="a" style="left:576px;top:92px" width="15" height="17" viewBox="0 0 15 17"><path d="M1.6 1.6 L9.6 1.6 L13.400 5.4 L13.400 15.6 L1.6 15.6 Z" fill="#EAF2FC" stroke="#5C8CD0" stroke-width="1"/><path d="M9.6 1.6 L9.6 5.4 L13.400 5.4 Z" fill="#A8C8F0" stroke="#5C8CD0" stroke-width=".8"/><path d="M3.6 5.6 L8 5.6 M3.6 7.8 L11.4 7.8 M3.6 10 L11.4 10 M3.6 12.2 L11.4 12.2" stroke="#3C78D0" stroke-width="1.1"/></svg>
<svg class="a" style="left:626px;top:91px" width="18" height="18" viewBox="0 0 18 18"><circle cx="9" cy="9" r="8.4" fill="#1A1A1A"/><circle cx="9" cy="9" r="6.4" fill="#14401C"/><path d="M14.6 6.4 A6.2 6.2 0 0 1 12 14.4" fill="none" stroke="#D02818" stroke-width="2"/><path d="M3.2 10.400 A6 6 0 0 1 8 3.2" fill="none" stroke="#38B848" stroke-width="1.4"/><path d="M9 9.6 L11.6 4.6" stroke="#F4F4F4" stroke-width="1.3"/><circle cx="9" cy="9.6" r="1.3" fill="#D8D8D8"/></svg>
<svg class="a" style="left:745px;top:91px" width="16" height="18" viewBox="0 0 16 18"><path d="M1.4 1.2 L6.8 1.2 L9.400 3.800 L9.400 11.4 L1.4 11.4 Z" fill="#F2F6FC" stroke="#5C84C4" stroke-width="1"/><path d="M6 5.6 L11.4 5.6 L14.400 8.6 L14.400 16.2 L6 16.2 Z" fill="#E4EEFA" stroke="#4C78C0" stroke-width="1"/><path d="M11.4 5.6 L11.4 8.6 L14.400 8.6 Z" fill="#A8C4EC"/><path d="M7.8 10.400 L12.600 10.400 M7.8 12.400 L12.600 12.400 M7.8 14.2 L12.600 14.2" stroke="#7CA0DC" stroke-width=".9"/></svg></div></body></html>
